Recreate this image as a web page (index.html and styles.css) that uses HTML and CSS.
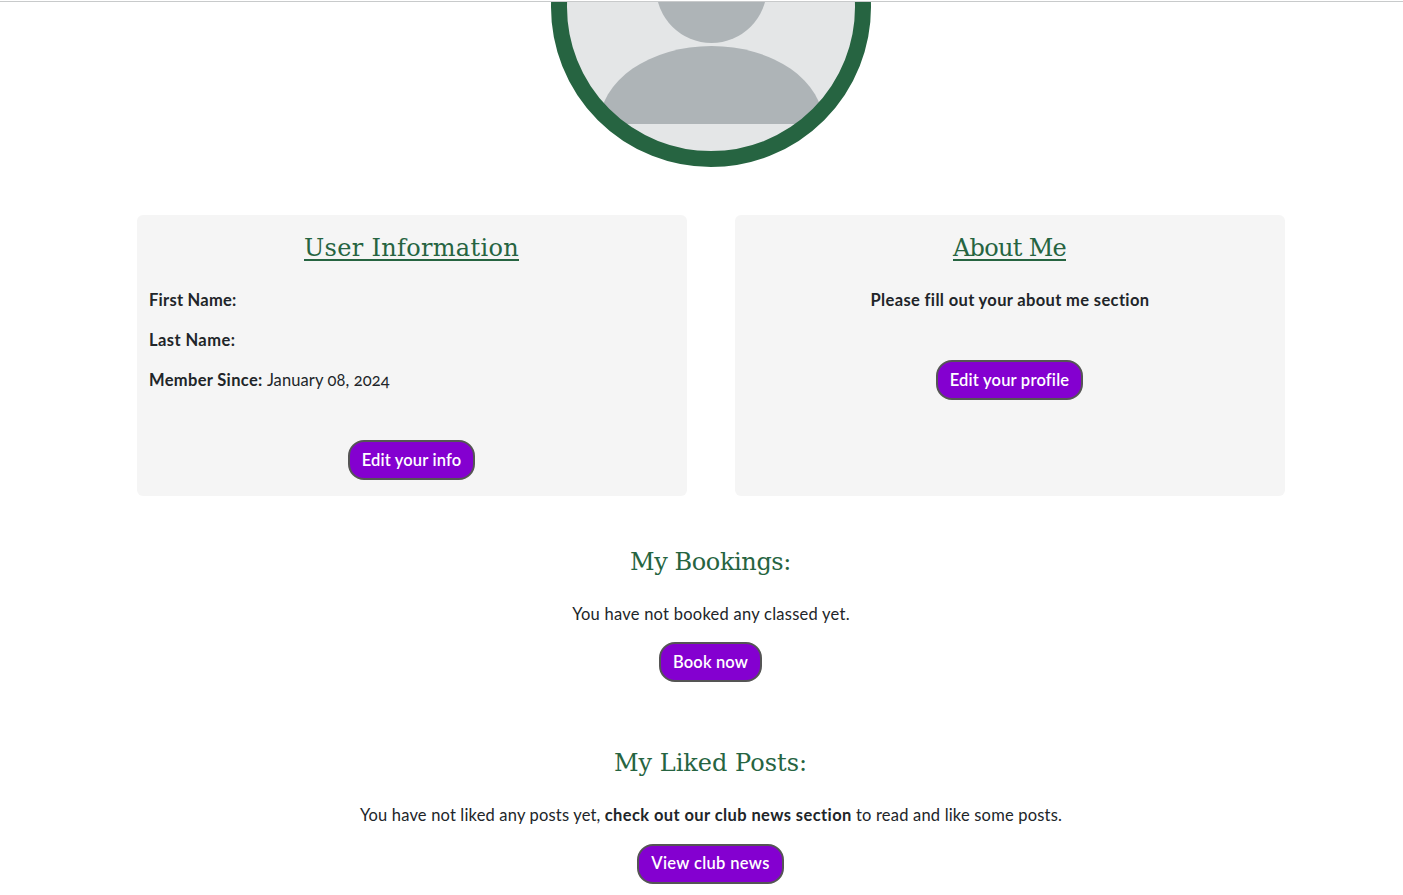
FILE: index.html
```html
<!DOCTYPE html>
<html lang="en">
<head>
<meta charset="utf-8">
<title>My Profile</title>
<link rel="stylesheet" href="styles.css">
</head>
<body>
<main class="profile">
  <div class="avatar">
    <svg class="avatar-art" width="320" height="165" viewBox="0 0 320 165" role="img" aria-label="Profile picture">
      <defs><clipPath id="disc"><circle cx="160" cy="5" r="145"/></clipPath></defs>
      <g clip-path="url(#disc)">
        <rect width="320" height="165" fill="#e4e6e7"/>
        <circle cx="160.500" cy="-14.400" r="55.400" fill="#aeb4b7"/>
        <path d="M48.500 122a112 78 0 0 1 224 0z" fill="#aeb4b7"/>
      </g>
      <circle cx="160" cy="5" r="152" fill="none" stroke="#266441" stroke-width="16"/>
    </svg>
  </div>
  <div class="cards">
    <section class="card">
      <h2 class="title underlined"><span class="t-user">User Information</span></h2>
      <p class="row"><strong class="s-first">First Name:</strong></p>
      <p class="row"><strong class="s-last">Last Name:</strong></p>
      <p class="row"><strong class="s-member">Member Since:</strong> <span class="s-date">January 08, 2024</span></p>
      <a class="btn btn-info"><span>Edit your info</span></a>
    </section>
    <section class="card">
      <h2 class="title underlined"><span class="t-about">About Me</span></h2>
      <p class="row centered"><strong class="s-please">Please fill out your about me section</strong></p>
      <a class="btn btn-profile"><span>Edit your profile</span></a>
    </section>
  </div>
  <section class="block">
    <h2 class="title"><span class="t-book">My Bookings:</span></h2>
    <p class="text"><span class="s-booked">You have not booked any classed yet.</span></p>
    <a class="btn btn-book"><span>Book now</span></a>
  </section>
  <section class="block">
    <h2 class="title"><span class="t-liked">My Liked Posts:</span></h2>
    <p class="text"><span class="s-l1">You have not liked any posts yet,</span> <strong class="s-l2">check out our club news section</strong> <span class="s-l3">to read and like some posts.</span></p>
    <a class="btn btn-news"><span>View club news</span></a>
  </section>
</main>
</body>
</html>
```

FILE: styles.css
```css
* { box-sizing: border-box; }
body {
  margin: 0;
  height: 895px;
  overflow: hidden;
  background: #fff;
  color: #212529;
  font: 400 16.5px/24px Lato, "Open Sans", sans-serif;
  font-variant-numeric: oldstyle-nums;
}
.profile {
  padding: 1px 0 0 137px;
  width: 1285px;
}
.avatar {
  display: flex;
  justify-content: center;
  margin: 0 -137px 48px;
  padding-left: 19px;
  width: 1403px;
  border-top: 1px solid #c8cacb;
}
.avatar-art { display: block; }
.cards {
  display: grid;
  grid-template-columns: 1fr 1fr;
  gap: 48px;
}
.card {
  display: flex;
  flex-direction: column;
  align-items: center;
  height: 281px;
  padding: 16px 12px;
  border-radius: 6px;
  background: #f5f5f5;
}
.title {
  margin: 0 1px 24px 0;
  color: #266441;
  font: 400 24px/35px "DejaVu Serif", serif;
  height: 33px;
  white-space: nowrap;
}
.underlined span {
  display: block;
  height: 30px;
  border-bottom: 2px solid #266441;
}
.row { align-self: stretch; margin: 0 0 16px; }
.centered { text-align: center; }
strong { font-weight: 700; }
.btn {
  display: flex;
  align-items: center;
  justify-content: center;
  height: 40px;
  margin-right: 1px;
  border: 2px solid #555;
  border-radius: 16px;
  background: #8400d0;
  color: #fff;
  font-weight: 600;
  white-space: nowrap;
}
.card .btn { margin-top: 32px; }
.btn-info { width: 127px; letter-spacing: .15px; }
.btn-profile { width: 147px; letter-spacing: .2px; }
.btn-book { width: 103px; letter-spacing: .15px; }
.btn-news { width: 147px; margin-top: 1px; padding-bottom: 2px; letter-spacing: .34px; }
.block {
  display: flex;
  flex-direction: column;
  align-items: center;
  padding-top: 49px;
  height: 201px;
}
.text { margin: 0 0 16px; white-space: nowrap; }
.t-user { letter-spacing: .32px; }
.t-about { letter-spacing: -.7px; }
.t-book { letter-spacing: -.4px; }
.s-first { letter-spacing: .25px; }
.s-last { letter-spacing: .42px; }
.s-member { letter-spacing: .33px; }
.s-date { letter-spacing: .1px; }
.s-please { letter-spacing: .35px; }
.s-booked { letter-spacing: .25px; }
.s-l1 { letter-spacing: .17px; }
.s-l2 { letter-spacing: .4px; }
.s-l3 { letter-spacing: .19px; }
```
